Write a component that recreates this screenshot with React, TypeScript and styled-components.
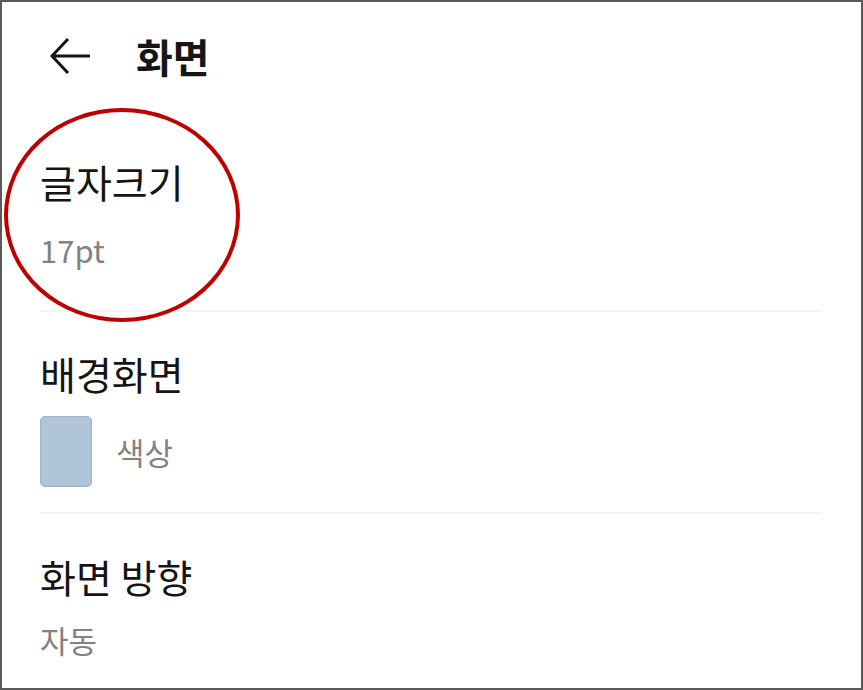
import React from "react";
import styled, { createGlobalStyle } from "styled-components";

const Global = createGlobalStyle`
  html, body { margin: 0; padding: 0; background: #fff; }
  body { font-family: "Noto Sans CJK KR", "Noto Sans", sans-serif; }
`;

const Frame = styled.div`
  position: relative;
  box-sizing: border-box;
  width: 863px;
  height: 690px;
  border: 2px solid #5a5a5a;
  background: #fff;
  overflow: hidden;
`;

const Header = styled.header`
  display: flex;
  align-items: center;
  height: 108px;
  padding-left: 44px;
  box-sizing: border-box;
`;

const BackButton = styled.div`
  width: 48px;
  height: 48px;
  display: flex;
  align-items: center;
  justify-content: center;
  margin-right: 42px;
`;

const HeaderTitle = styled.h1`
  margin: 0;
  font-size: 40px;
  font-weight: 700;
  color: #161616;
  line-height: 48px;
`;

const List = styled.div`
  display: flex;
  flex-direction: column;
  padding: 0 39px 0 38px;
`;

const Item = styled.div<{ $pt: number; $pb: number; $last?: boolean }>`
  display: flex;
  flex-direction: column;
  padding-top: ${(p) => p.$pt}px;
  padding-bottom: ${(p) => p.$pb}px;
  border-bottom: ${(p) => (p.$last ? "none" : "2px solid #f4f4f4")};
`;

const Title = styled.div`
  font-size: 39px;
  line-height: 44px;
  color: #141414;
`;

const Sub = styled.div<{ $mt: number }>`
  font-size: 31px;
  line-height: 36px;
  color: #828282;
  margin-top: ${(p) => p.$mt}px;
`;

const SwatchRow = styled.div`
  display: flex;
  align-items: center;
  gap: 24px;
  margin-top: 21px;
`;

const Swatch = styled.div`
  width: 52px;
  height: 71px;
  box-sizing: border-box;
  background: #b0c5d9;
  border: 1px solid #9eb2c4;
  border-radius: 5px;
`;

const Circle = styled.div`
  position: absolute;
  left: 2px;
  top: 106px;
  width: 236px;
  height: 214px;
  box-sizing: border-box;
  border: 4px solid #c00000;
  border-radius: 50%;
  pointer-events: none;
`;

export default function App() {
  return (
    <>
      <Global />
      <Frame>
        <Header>
          <BackButton>
            <svg width="42" height="40" viewBox="0 0 42 40" fill="none">
              <path
                d="M41 20H3M19 3L3 20L19 37"
                stroke="#161616"
                strokeWidth="3"
                strokeLinecap="butt"
              />
            </svg>
          </BackButton>
          <HeaderTitle>화면</HeaderTitle>
        </Header>
        <List>
          <Item $pt={49} $pb={42}>
            <Title>글자크기</Title>
            <Sub $mt={29}>17pt</Sub>
          </Item>
          <Item $pt={39} $pb={25}>
            <Title>배경화면</Title>
            <SwatchRow>
              <Swatch />
              <Sub $mt={0}>색상</Sub>
            </SwatchRow>
          </Item>
          <Item $pt={40} $pb={20} $last>
            <Title>화면 방향</Title>
            <Sub $mt={24}>자동</Sub>
          </Item>
        </List>
        <Circle />
      </Frame>
    </>
  );
}
